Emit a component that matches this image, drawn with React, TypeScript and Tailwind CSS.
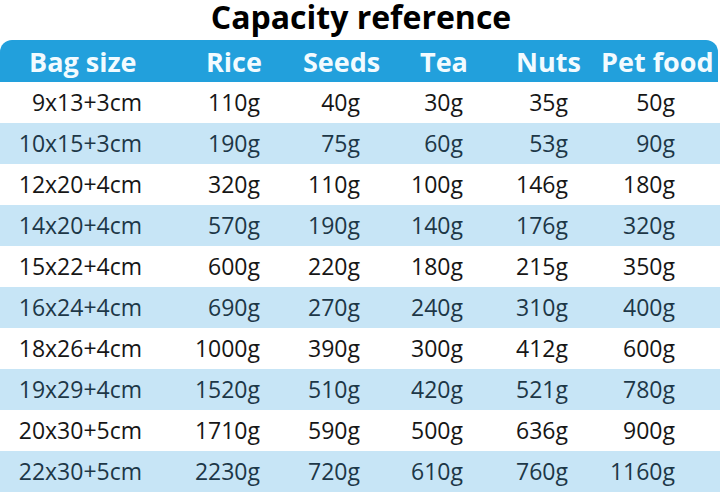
import React from 'react';

const rows = [
  ['9x13+3cm', '110g', '40g', '30g', '35g', '50g'],
  ['10x15+3cm', '190g', '75g', '60g', '53g', '90g'],
  ['12x20+4cm', '320g', '110g', '100g', '146g', '180g'],
  ['14x20+4cm', '570g', '190g', '140g', '176g', '320g'],
  ['15x22+4cm', '600g', '220g', '180g', '215g', '350g'],
  ['16x24+4cm', '690g', '270g', '240g', '310g', '400g'],
  ['18x26+4cm', '1000g', '390g', '300g', '412g', '600g'],
  ['19x29+4cm', '1520g', '510g', '420g', '521g', '780g'],
  ['20x30+5cm', '1710g', '590g', '500g', '636g', '900g'],
  ['22x30+5cm', '2230g', '720g', '610g', '760g', '1160g'],
];

const headers = ['Bag size', 'Rice', 'Seeds', 'Tea', 'Nuts', 'Pet food'];
const headerPad = ['pl-[29px]', 'pl-[46px]', 'pl-[28px]', 'pl-[30px]', 'pl-[26px]', 'pl-[11px]'];
const cellPad = ['pr-[18px]', 'pr-[15px]', 'pr-[30px]', 'pr-[27px]', 'pr-[22px]', 'pr-[45px]'];

const cols = 'grid grid-cols-[160px_115px_115px_100px_100px_130px]';

const App: React.FC = () => {
  return (
    <div className="w-[720px] h-[493px] bg-white overflow-hidden font-['Open_Sans',sans-serif]">
      <h1 className="h-[40px] pt-[1px] text-center text-[32px] font-bold text-black leading-[32px] pl-[2px]">
        Capacity reference
      </h1>
      <div className={`${cols} h-[42px] mr-[2px] items-center bg-[#22a0dc] rounded-t-[12px] text-[#f2fbff] text-[27px] font-bold`}>
        {headers.map((h, i) => (
          <div key={h} className={`${headerPad[i]} leading-none`}>{h}</div>
        ))}
      </div>
      {rows.map((row, r) => (
        <div
          key={r}
          className={`${cols} h-[41px] items-center text-[23px] ${
            r % 2 === 1 ? 'bg-[#c7e5f6] text-[#1d3747]' : 'bg-white text-[#161616]'
          }`}
        >
          {row.map((cell, i) => (
            <div key={i} className={`${cellPad[i]} text-right leading-none`}>{cell}</div>
          ))}
        </div>
      ))}
    </div>
  );
};

export default App;
